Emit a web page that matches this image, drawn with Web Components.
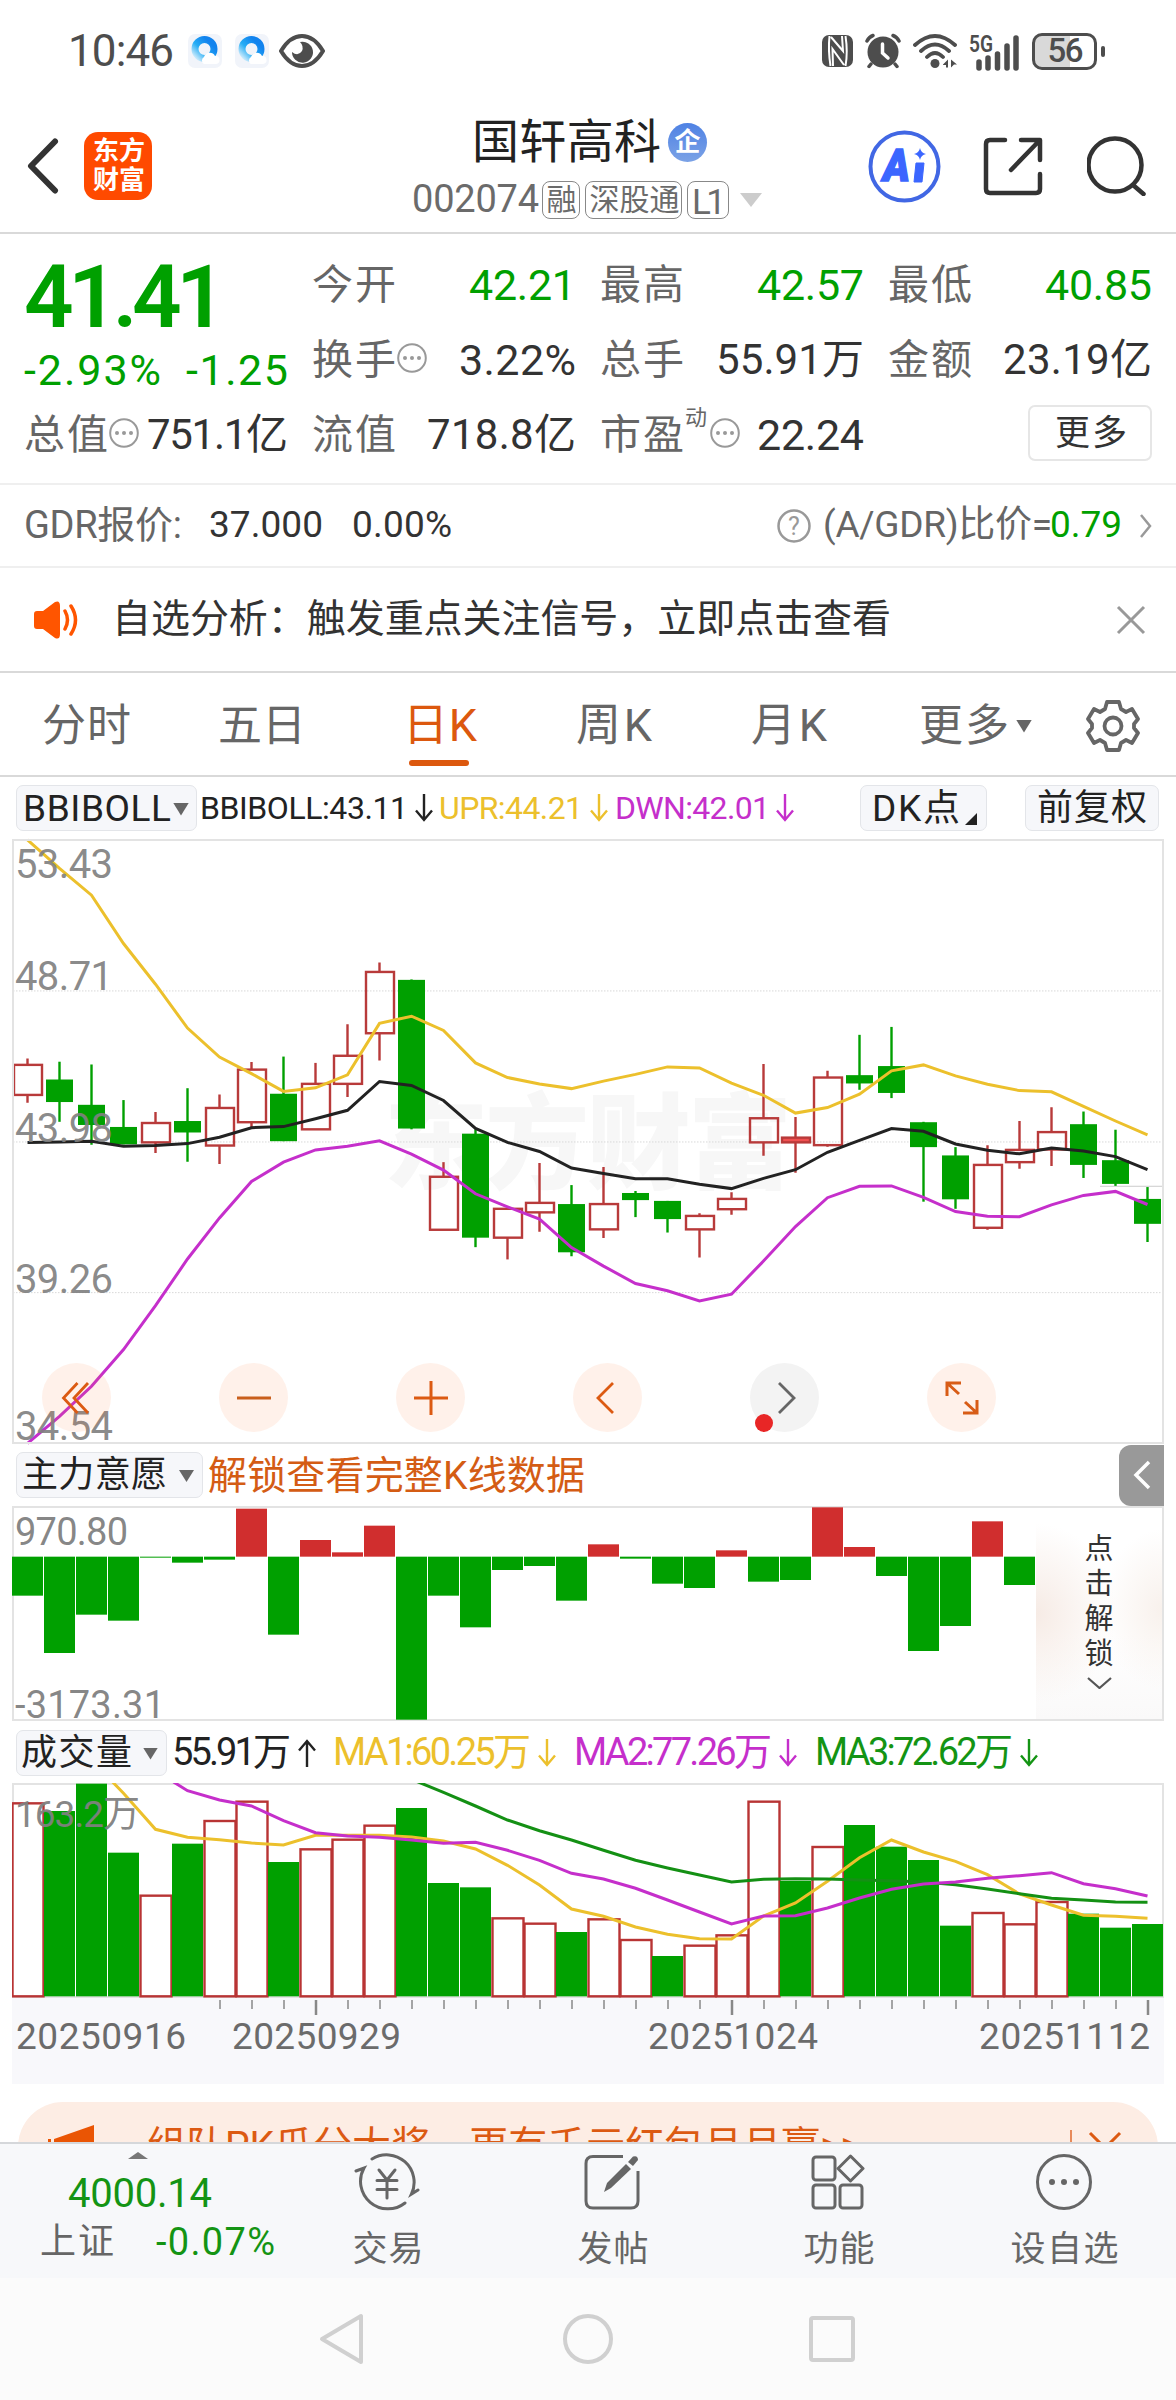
<!DOCTYPE html>
<html lang="zh-CN">
<head>
<meta charset="utf-8">
<title>国轩高科 002074</title>
<style>
    body {
        margin: 0;
        width: 1176px;
        height: 2400px;
        overflow: hidden;
        background: #fff;
        color: #333;
        font-family: Roboto, "Noto Sans CJK SC", sans-serif;
        display: flex;
        flex-direction: column;
    }
</style>
</head>
<body>
<status-bar></status-bar>
<stock-header></stock-header>
<quote-panel></quote-panel>
<gdr-row></gdr-row>
<notice-bar><fit-text w="777" s="39">自选分析：触发重点关注信号，立即点击查看</fit-text></notice-bar>
<period-tabs></period-tabs>
<indicator-row></indicator-row>
<candle-chart></candle-chart>
<flow-row></flow-row>
<flow-chart></flow-chart>
<volume-row></volume-row>
<volume-chart></volume-chart>
<date-axis></date-axis>
<promo-strip><fit-text w="712" s="39">组队PK瓜分大奖，更有千元红包月月赢&gt;&gt;</fit-text></promo-strip>
<bottom-nav></bottom-nav>
<system-nav></system-nav>

<script>
const GREEN = '#00a000';
const RED = '#b83a3a';
const GOLD = '#ecc02c';
const PURPLE = '#c52fcb';

function define(name, html) {
    customElements.define(name, class extends HTMLElement {
        constructor() {
            super();
            this.attachShadow({mode: 'open'}).innerHTML = html;
        }
    });
}

// one line of text, tracked so that it fills the width in "w"
class FitText extends HTMLElement {
    constructor() {
        super();
        this._root = this.attachShadow({mode: 'open'});
        this._root.innerHTML = `<style>
                                    :host {display: block; flex: none; white-space: nowrap; line-height: 1.2;}
                                    span {display: inline-block;}
                                </style><span><slot></slot></span>`;
    }

    connectedCallback() {
        const span = this._root.querySelector('span');
        this.style.fontSize = this.getAttribute('s') + 'px';
        if (this.hasAttribute('b')) this.style.fontWeight = this.getAttribute('b');
        if (this.hasAttribute('c')) this.style.color = this.getAttribute('c');
        const w = Number(this.getAttribute('w'));
        if (!w) return;
        const n = [...this.textContent].length;
        span.style.letterSpacing = '0px';
        // leave room for the side bearing of the last glyph
        span.style.letterSpacing = ((w + 2 - span.getBoundingClientRect().width) / Math.max(n - 1, 1)) + 'px';
        this.style.width = w + 'px';
    }
}
customElements.define('fit-text', FitText);

define('dots-icon', `<style>:host {display: block; flex: none; width: 30px; height: 30px;} svg {display: block;}</style>
    <svg width="30" height="30" fill="none" stroke="#999" stroke-width="2"><circle cx="15" cy="15" r="13.8"/>
    <g fill="#999" stroke="none"><circle cx="8" cy="15" r="2"/><circle cx="15" cy="15" r="2"/><circle cx="22" cy="15" r="2"/></g></svg>`);

define('down-caret', `<style>:host {display: block; flex: none; width: 16px; height: 13px;
        background: var(--caret, #666); clip-path: polygon(0 0, 100% 0, 50% 100%);}</style>`);

// thin arrow behind an indicator value
class TrendArrow extends HTMLElement {
    constructor() {
        super();
        const up = this.hasAttribute('up');
        this.attachShadow({mode: 'open'}).innerHTML = `
            <style>:host {display: block; flex: none; width: 18px; height: 30px;} svg {display: block; ${up ? 'transform: rotate(180deg);' : ''}}</style>
            <svg width="18" height="30" fill="none" stroke="currentColor" stroke-width="2.4"><path d="M9 1V27M1 17.500L9 27L17 17.500"/></svg>`;
    }
}
customElements.define('trend-arrow', TrendArrow);

define('chart-chip', `<style>
        :host {display: flex; flex: none; box-sizing: border-box; height: 46px; align-items: center; background: #f6f7fa;
            border: 1.5px solid #e3e5e9; border-radius: 7px; color: #222; padding-top: 2px;}
    </style><slot></slot>`);

define('status-bar', `<style>
        :host {display: flex; height: 100px; box-sizing: border-box; padding: 2px 71px 0 68px; align-items: center; color: #4d4d4d; flex: none;}
        svg {display: block; flex: none;}
        .battery {box-sizing: border-box; width: 65px; height: 37px; border: 3px solid #4d4d4d; border-radius: 10px; margin-left: 12px;
            background: linear-gradient(90deg, #d9d9d9 60%, #fff 60%); display: flex; align-items: center; justify-content: center;}
        .nub {width: 4px; height: 11px; border-radius: 2px; background: #4d4d4d; margin-left: 4px;}
    </style>
    <fit-text w="104" s="44">10:46</fit-text>
    <svg style="margin-left:16px" width="34" height="34" viewBox="0 0 34 34"><defs><linearGradient id="q" x1="1" y1="0" x2="0" y2="1"><stop offset=".2" stop-color="#1283ee"/><stop offset=".6" stop-color="#25adf5"/><stop offset="1" stop-color="#d8effc"/></linearGradient></defs><rect width="34" height="34" rx="7" fill="#f1f4fa"/><circle cx="16.500" cy="15" r="9.500" fill="none" stroke="url(#q)" stroke-width="7"/><path d="M16 30a4 4 0 0 1 0-7a6 6 0 0 1 11-1a4 4 0 0 1 1 8z" fill="#fff"/></svg>
    <svg style="margin-left:13px" width="34" height="34" viewBox="0 0 34 34"><rect width="34" height="34" rx="7" fill="#f1f4fa"/><circle cx="16.500" cy="15" r="9.500" fill="none" stroke="url(#q)" stroke-width="7"/><path d="M16 30a4 4 0 0 1 0-7a6 6 0 0 1 11-1a4 4 0 0 1 1 8z" fill="#fff"/></svg>
    <svg style="margin-left:10px" width="46" height="34" viewBox="0 0 46 34"><path d="M2 17Q11 2 23 2T44 17Q35 32 23 32T2 17Z" fill="none" stroke="#4d4d4d" stroke-width="4"/><path d="M21 8a10.500 10.500 0 1 1-8 10q6 5 10-1q2-5-2-9z" fill="#4d4d4d"/></svg>
    <svg style="margin-left:auto" width="32" height="34" viewBox="0 0 32 34"><rect y="1" width="31" height="32" rx="7" fill="#4d4d4d"/><path d="M7.500 2Q6 16 8.500 32M23.500 2Q26 18 23.500 32M9 3L21 17L20 2M11 32L10.500 15L22 31" fill="none" stroke="#fff" stroke-width="2"/></svg>
    <svg style="margin-left:11px" width="36" height="36" viewBox="0 0 36 36"><circle cx="18" cy="19" r="15.500" fill="#4d4d4d"/><path d="M2 8Q4 4 8 2.500M34 8Q32 4 28 2.500M6 31L4 33.500M30 31L32 33.500" stroke="#4d4d4d" stroke-width="3.500" stroke-linecap="round" fill="none"/><path d="M17.500 11V20L23 25" stroke="#fff" stroke-width="3.500" fill="none" stroke-linecap="round"/></svg>
    <svg style="margin-left:12px" width="44" height="36" viewBox="0 0 44 36"><g fill="none" stroke="#4d4d4d" stroke-width="3.800" stroke-linecap="round"><path d="M2 12Q22-6 42 12M8 18Q22 5 36 18M14 24Q22 16 30 24"/></g><circle cx="22" cy="30.500" r="4.500" fill="#4d4d4d"/><path d="M30 31.500L35 26.500V34.500H33V32H30zM38 26.500L44 31.500H41L38 34.500z" fill="#4d4d4d"/></svg>
    <svg style="margin-left:12px" width="51" height="40" viewBox="0 -4 51 40"><text x="0" y="17" font-size="23" font-weight="600" textLength="24" lengthAdjust="spacingAndGlyphs" fill="#4d4d4d">5G</text><path d="M10 27V33M19 23V33M28.500 19V33M38 11V33M47 3V33" stroke="#4d4d4d" stroke-width="5.500" stroke-linecap="round"/></svg>
    <div class="battery"><fit-text w="34" s="33" b="500">56</fit-text></div><div class="nub"></div>`);

define('stock-header', `<style>
        :host {display: grid; grid-template-columns: 412px 1fr 308px; flex: none; height: 134px; box-sizing: border-box; border-bottom: 2px solid #d9d9d9;}
        .left {display: flex; align-items: center; padding-left: 27px;}
        .logo {width: 68px; height: 68px; border-radius: 14px; background: #ff4a00; margin-left: 24px; display: grid; align-content: center; justify-content: center;}
        .mid {padding-top: 13px;}
        .title {display: flex; align-items: center; padding-left: 60px; height: 58px;}
        .badge {width: 39px; height: 39px; border-radius: 50%; background: linear-gradient(#4f82e4, #7ba2e6); display: grid; place-items: center; margin-left: 9px;
            color: #fff; font-size: 26px; line-height: 39px; font-weight: 700; margin-top: 1px;}
        .sub {display: flex; align-items: center; height: 58px; color: #6b6b6b;}
        .tag {box-sizing: border-box; height: 38px; border: 1.5px solid #888; border-radius: 8px; margin-left: 5px; display: grid; place-items: center;}
        down-caret {--caret: #ccc; width: 22px; height: 14px; margin-left: 11px;}
        .right {display: flex; align-items: center;}
        svg {display: block; flex: none;}
    </style>
    <div class="left">
        <svg width="33" height="58" fill="none" stroke="#333" stroke-width="6" stroke-linecap="round" stroke-linejoin="round"><path d="M28 4.500L4 29L28 53.500"/></svg>
        <div class="logo"><fit-text w="50" s="26" b="700" c="#fff" style="line-height:29px">东方</fit-text><fit-text w="50" s="26" b="700" c="#fff" style="line-height:29px">财富</fit-text></div>
    </div>
    <div class="mid">
        <div class="title"><fit-text w="187" s="47" c="#222">国轩高科</fit-text><div class="badge">企</div></div>
        <div class="sub"><fit-text w="125" s="38">002074</fit-text>
            <div class="tag" style="width:38px"><fit-text w="29" s="30">融</fit-text></div>
            <div class="tag" style="width:97px"><fit-text w="88" s="30">深股通</fit-text></div>
            <div class="tag" style="width:42px"><fit-text w="32" s="35">L1</fit-text></div>
            <down-caret></down-caret></div>
    </div>
    <div class="right">
        <svg width="73" height="73" viewBox="0 0 73 73"><circle cx="36.500" cy="36.500" r="34" fill="none" stroke="#4167e4" stroke-width="4"/><text x="15" y="51" font-size="44" font-weight="900" font-style="italic" fill="#3b66ff" stroke="#3b66ff" stroke-width="1.500" textLength="27" lengthAdjust="spacingAndGlyphs">A</text><path d="M48 33h8l-2 19h-8z" fill="#3b66ff" stroke="#3b66ff" stroke-linejoin="round"/><path d="M52 18q1 5 6 6q-5 1-6 6q-1-5-6-6q5-1 6-6z" fill="#3b66ff"/></svg>
        <svg style="margin-left:42px" width="60" height="60" fill="none" stroke="#333" stroke-width="4.500" stroke-linecap="round" stroke-linejoin="round"><path d="M22 4H7Q3 4 3 8V53Q3 57 7 57H53Q57 57 57 53V38M38 4H57V24M56 5L28 34"/></svg>
        <svg style="margin-left:44px" width="60" height="60" fill="none" stroke="#333" stroke-width="4.500" stroke-linecap="round"><circle cx="28" cy="29" r="26.500"/><path d="M46 49L56.500 58"/></svg>
    </div>`);

define('quote-cell', `<style>
        :host {display: flex; align-items: center; height: 75px; width: 262px; color: #333;}
        .label {display: flex; align-items: center; color: #666; gap: 3px;}
        ::slotted([slot=value]) {margin-left: auto;}
    </style><div class="label"><slot></slot></div><slot name="value"></slot>`);

define('quote-panel', `<style>
        :host {display: grid; grid-template-columns: repeat(4, 262px); column-gap: 26px; grid-auto-rows: 75px; flex: none; height: 251px;
            box-sizing: border-box; padding: 14px 25px 0 24px; border-bottom: 2px solid #efefef; color: #333;}
        .price {grid-row: span 2; display: flex; flex-direction: column; color: ${GREEN};}
        .change {display: flex; justify-content: space-between; margin-top: -1px;}
        .more {justify-self: end; align-self: center; box-sizing: border-box; width: 124px; height: 56px; border: 2px solid #e6e6e6; border-radius: 7px; display: grid; place-items: center; margin-right: -2px; margin-top: -5px; padding-top: 2px;}
        quote-cell dots-icon {margin-top: -5px;}
    </style>
    <div class="price"><fit-text w="200" s="87" b="600" style="line-height:98px">41.41</fit-text>
        <div class="change"><fit-text w="135" s="43">-2.93%</fit-text><fit-text w="100" s="43">-1.25</fit-text></div></div>
    <quote-cell><fit-text w="82" s="41">今开</fit-text><fit-text slot="value" w="105" s="43" c="${GREEN}">42.21</fit-text></quote-cell>
    <quote-cell><fit-text w="82" s="41">最高</fit-text><fit-text slot="value" w="105" s="43" c="${GREEN}">42.57</fit-text></quote-cell>
    <quote-cell><fit-text w="82" s="41">最低</fit-text><fit-text slot="value" w="105" s="43" c="${GREEN}">40.85</fit-text></quote-cell>
    <quote-cell><fit-text w="82" s="41">换手</fit-text><dots-icon></dots-icon><fit-text slot="value" w="115" s="43">3.22%</fit-text></quote-cell>
    <quote-cell><fit-text w="82" s="41">总手</fit-text><fit-text slot="value" w="146" s="42">55.91万</fit-text></quote-cell>
    <quote-cell><fit-text w="82" s="41">金额</fit-text><fit-text slot="value" w="147" s="42">23.19亿</fit-text></quote-cell>
    <quote-cell><fit-text w="82" s="41">总值</fit-text><dots-icon></dots-icon><fit-text slot="value" w="139" s="42">751.1亿</fit-text></quote-cell>
    <quote-cell><fit-text w="82" s="41">流值</fit-text><fit-text slot="value" w="147" s="42">718.8亿</fit-text></quote-cell>
    <quote-cell><fit-text w="82" s="41">市盈</fit-text><fit-text w="22" s="22" style="align-self:flex-start;margin-top:-6px">动</fit-text><dots-icon></dots-icon><fit-text slot="value" w="105" s="43">22.24</fit-text></quote-cell>
    <div class="more"><fit-text w="70" s="35">更多</fit-text></div>`);

define('gdr-row', `<style>
        :host {display: flex; align-items: center; flex: none; height: 83px; box-sizing: border-box; padding: 0 24px 0 24px; border-bottom: 2px solid #efefef; color: #666;}
        svg {display: block; flex: none;}
    </style>
    <fit-text w="156" s="38">GDR报价:</fit-text>
    <fit-text style="margin-left:29px" w="112" s="37" c="#333">37.000</fit-text>
    <fit-text style="margin-left:31px" w="98" s="37" c="#333">0.00%</fit-text>
    <svg style="margin-left:auto" width="34" height="34"><circle cx="17" cy="17" r="15.500" fill="none" stroke="#999" stroke-width="2.500"/><text x="17" y="25.500" text-anchor="middle" font-size="25" fill="#999">?</text></svg>
    <fit-text style="margin-left:12px" w="227" s="37">(A/GDR)比价=</fit-text>
    <fit-text style="margin-left:0" w="70" s="37" c="${GREEN}">0.79</fit-text>
    <svg style="margin-left:20px" width="12" height="24" fill="none" stroke="#999" stroke-width="2.500"><path d="M1 1L10 12L1 23"/></svg>`);

define('notice-bar', `<style>
        :host {display: flex; align-items: center; flex: none; height: 105px; box-sizing: border-box; padding: 0 30px 0 34px; border-bottom: 2px solid #d9d9d9; color: #333;}
        svg {display: block; flex: none;}
        ::slotted(fit-text) {margin-left: 34px;}
    </style>
    <svg width="44" height="38" viewBox="0 0 44 38"><path d="M3 10Q0 10 0 13V25Q0 28 3 28H9L21 37Q26 39 26 33V5Q26-1 21 1L9 10z" fill="#ff5500"/><path d="M31 10Q36 19 31 28M37 5Q46 19 37 33" fill="none" stroke="#ff5500" stroke-width="3.500" stroke-linecap="round"/></svg>
    <slot></slot>
    <svg style="margin-left:auto" width="30" height="30" stroke="#999" stroke-width="3"><path d="M2 2L28 28M28 2L2 28"/></svg>`);

define('period-tabs', `<style>
        :host {display: flex; align-items: center; flex: none; height: 104px; box-sizing: border-box; padding: 4px 0 0 42px; border-bottom: 2px solid #d9d9d9; color: #666;}
        .on {position: relative; color: #dc580e;}
        .on::after {content: ""; position: absolute; left: 50%; margin-left: -30px; bottom: -13px; width: 60px; height: 6px; border-radius: 3px; background: #dc580e;}
        svg {display: block; flex: none;}
    </style>
    <fit-text w="87" s="44">分时</fit-text>
    <fit-text style="margin-left:89px" w="86" s="44">五日</fit-text>
    <div class="on" style="margin-left:99px"><fit-text w="72" s="45">日K</fit-text></div>
    <fit-text style="margin-left:101px" w="74" s="45">周K</fit-text>
    <fit-text style="margin-left:101px" w="74" s="45">月K</fit-text>
    <fit-text style="margin-left:94px" w="88" s="44">更多</fit-text>
    <down-caret style="margin-left:9px"></down-caret>
    <svg style="margin-left:54px" width="54" height="54" viewBox="0 0 54 54" fill="none" stroke="#666" stroke-width="3.800" stroke-linejoin="round"><path d="M21 3H33L35 10L40 13L46 10L52 20L48 25V29L52 34L46 44L40 41L35 44L33 51H21L19 44L14 41L8 44L2 34L6 29V25L2 20L8 10L14 13L19 10Z"/><circle cx="27" cy="27" r="8.500"/></svg>`);

define('indicator-row', `<style>
        :host {display: flex; align-items: center; flex: none; height: 62px; padding-left: 16px;}
        .corner {width: 12px; height: 12px; background: #222; clip-path: polygon(100% 0, 100% 100%, 0 100%); margin: 20px 0 0 7px;}
        trend-arrow {margin-left: 9px;}
    </style>
    <chart-chip style="width:181px;padding-left:6px"><fit-text w="146" s="37">BBIBOLL</fit-text><down-caret style="margin-left:4px"></down-caret></chart-chip>
    <fit-text style="margin-left:3px" w="206" s="32" c="#222">BBIBOLL:43.11</fit-text><trend-arrow style="color:#222"></trend-arrow>
    <fit-text style="margin-left:6px" w="142" s="32" c="${GOLD}">UPR:44.21</fit-text><trend-arrow style="color:${GOLD}"></trend-arrow>
    <fit-text style="margin-left:7px" w="153" s="32" c="${PURPLE}">DWN:42.01</fit-text><trend-arrow style="color:${PURPLE};margin-left:8px"></trend-arrow>
    <chart-chip style="margin-left:66px;width:127px;padding-left:11px"><fit-text w="86" s="37">DK点</fit-text><div class="corner"></div></chart-chip>
    <chart-chip style="margin-left:38px;width:134px;padding-left:11px"><fit-text w="108" s="36">前复权</fit-text></chart-chip>`);

// columns are 32px apart, the first one is centred on 15.5
const X = i => 15.5 + 32 * i;
const line = (points, color, y, first = 0) =>
    `<polyline fill="none" stroke="${color}" stroke-width="3" points="${points.map((p, i) => X(i + first) + ',' + y(p).toFixed(1)).join(' ')}"/>`;

// kind, high, body top, body bottom, low
const CANDLES = [
    ['r', 578, 594, 670, 690], ['g', 586, 631, 688, 738], ['g', 593, 695, 746, 796], ['g', 683, 751, 795, 795],
    ['r', 713, 741, 790, 817], ['g', 653, 736, 765, 839], ['r', 669, 703, 798, 845], ['r', 587, 606, 739, 752],
    ['g', 573, 667, 787, 787], ['r', 589, 642, 757, 757], ['r', 491, 571, 642, 675], ['r', 335, 359, 514, 583],
    ['g', 378, 379, 755, 757], ['r', 840, 877, 1011, 1011], ['g', 757, 768, 1031, 1055], ['r', 958, 958, 1031, 1086],
    ['r', 842, 943, 967, 1016], ['g', 898, 946, 1068, 1078], ['r', 852, 946, 1010, 1032], ['g', 913, 918, 936, 979],
    ['g', 938, 938, 984, 1018], ['r', 969, 976, 1010, 1081], ['r', 916, 933, 959, 973], ['r', 592, 729, 790, 824],
    ['r', 726, 778, 790, 867], ['r', 609, 626, 797, 801], ['g', 518, 620, 641, 657], ['g', 498, 597, 665, 678],
    ['g', 738, 739, 802, 940], ['g', 802, 823, 934, 958], ['r', 797, 847, 1006, 1011], ['r', 736, 809, 840, 857],
    ['r', 701, 764, 808, 850], ['g', 712, 744, 847, 880], ['g', 758, 835, 895, 900], ['g', 903, 933, 996, 1042]
];
const UPR = [25, 97, 165, 287, 390, 501, 574, 616, 661, 652, 619, 489, 471, 507, 589, 626, 642, 654, 635, 618, 599, 602, 640, 671, 716, 702, 668, 609, 594, 622, 643, 659, 662, 699, 736, 771];
const BBI = [790, 789, 787, 800, 798, 793, 777, 753, 750, 730, 709, 636, 646, 684, 755, 790, 813, 855, 869, 882, 882, 896, 907, 881, 859, 815, 785, 755, 762, 794, 810, 819, 804, 812, 826, 859];
const DWN = [1551, 1483, 1407, 1314, 1203, 1085, 981, 889, 840, 809, 800, 786, 820, 860, 920, 953, 984, 1056, 1103, 1147, 1165, 1191, 1174, 1090, 1003, 930, 901, 900, 929, 965, 977, 978, 948, 924, 914, 947];

class CandleChart extends HTMLElement {
    constructor() {
        super();
        const y = v => v / 2.529 - 9;
        const candles = CANDLES.map(([k, hi, top, bottom, lo], i) => {
            const x = X(i);
            if (k === 'g')
                return `<path d="M${x} ${y(hi)}V${y(lo)}" stroke="${GREEN}" stroke-width="2.4"/>
                        <rect x="${x - 13.5}" y="${y(top)}" width="27" height="${y(bottom) - y(top)}" fill="${GREEN}"/>`;
            return `<path d="M${x} ${y(hi)}V${y(top)}M${x} ${y(bottom)}V${y(lo)}" stroke="${RED}" stroke-width="2.4"/>
                    <rect x="${x - 13.5}" y="${y(top)}" width="28" height="${y(bottom) - y(top)}" fill="${i === 24 ? '#f05050' : 'none'}" stroke="${RED}" stroke-width="2.4"/>`;
        }).join('');
        const grid = [407, 789, 1170].map(v => `<path d="M1 ${y(v)}H1151" stroke="#d8d8d8" stroke-dasharray="1.500 1.500"/>`).join('');
        const labels = [['53.43', 39], ['48.71', 151], ['43.98', 303], ['39.26', 454], ['34.54', 601]]
            .map(([t, at]) => `<text x="3" y="${at}" textLength="98">${t}</text>`).join('');
        this.attachShadow({mode: 'open'}).innerHTML = `<style>
                :host {display: block; flex: none; position: relative; height: 605px; margin: 0 12px;}
                svg {display: block; overflow: visible;}
                .tools {position: absolute; left: 30px; top: 524px; display: flex; gap: 108px;}
                .tools div {position: relative; width: 69px; height: 69px; border-radius: 50%; background: rgba(255, 120, 50, .1); display: grid; place-items: center;}
                .tools .off {background: #f3f3f3;}
                .off::after {content: ""; position: absolute; left: 5px; bottom: 0; width: 18px; height: 18px; border-radius: 50%; background: #e82626;}
            </style>
            <svg width="1152" height="605">
                <text x="372" y="342" font-size="104" font-weight="900" fill="#f7f7f7" textLength="408">东方财富</text>
                ${grid}
                <path d="M1088 ${y(901)}H1151" stroke="#ccc"/>
                ${candles}
                ${line(UPR, GOLD, y)}${line(BBI, '#222', y)}${line(DWN, PURPLE, y)}
                <g font-size="40" fill="#808080" fill-opacity=".92">${labels}</g>
                <rect x="1" y="1" width="1150" height="603" fill="none" stroke="#e3e3e3" stroke-width="2"/>
            </svg>
            <div class="tools">
                <div><svg width="34" height="34" fill="none" stroke="#dc5a12" stroke-width="2.800"><path d="M17.500 2L3.500 17L17.500 32M28 2L14 17L28 32"/></svg></div>
                <div><svg width="34" height="34" stroke="#c95f1c" stroke-width="3"><path d="M0 17H34"/></svg></div>
                <div><svg width="34" height="34" stroke="#dc5a12" stroke-width="3"><path d="M0 17H34M17 0V34"/></svg></div>
                <div><svg width="34" height="34" fill="none" stroke="#dc5a12" stroke-width="2.800"><path d="M22 2L7 17L22 32"/></svg></div>
                <div class="off"><svg width="34" height="34" fill="none" stroke="#666" stroke-width="2.800"><path d="M11 2L26 17L11 32"/></svg></div>
                <div><svg width="34" height="34" fill="none" stroke="#d85c16" stroke-width="3"><path d="M2 15V2H16M2 2L14 13M32 19V32H18M32 32L20 21"/></svg></div>
            </div>`;
    }
}
customElements.define('candle-chart', CandleChart);

define('flow-row', `<style>
        :host {display: flex; align-items: center; flex: none; height: 62px; padding: 0 12px 0 16px;}
        .fold {margin-left: auto; width: 45px; height: 61px; border-radius: 12px 0 0 12px; background: #999; display: grid; place-items: center;}
        svg {display: block;}
    </style>
    <chart-chip style="width:187px;padding-left:5px"><fit-text w="143" s="36">主力意愿</fit-text><down-caret style="margin-left:14px;width:15px;height:12px"></down-caret></chart-chip>
    <fit-text style="margin-left:5px;padding-top:2px" w="375" s="39" c="#d45c14">解锁查看完整K线数据</fit-text>
    <div class="fold"><svg width="18" height="30" fill="none" stroke="#fff" stroke-width="3.500"><path d="M16 2L3 15L16 28"/></svg></div>`);

const FLOW = [497, 669, 554, 572, 383, 398, 389, 236, 614, 330, 367, 287, 869, 497, 592, 420, 408, 512, 343, 386, 461, 474, 361, 455, 450, 232, 351, 438, 663, 588, 274, 465];

class FlowChart extends HTMLElement {
    constructor() {
        super();
        const y = v => v / 3 - 76;
        const zero = y(380);
        const bars = FLOW.map((v, i) => {
            const end = y(v);
            return `<rect x="${32 * i}" y="${Math.min(zero, end)}" width="31" height="${Math.abs(end - zero)}" fill="${end < zero ? '#d02e2e' : GREEN}"/>`;
        }).join('');
        this.attachShadow({mode: 'open'}).innerHTML = `<style>
                :host {display: grid; grid-template-columns: 1024px 1fr; flex: none; height: 215px; margin: 0 12px 1px; box-sizing: border-box;
                    box-shadow: inset 0 0 0 2px #e3e3e3;}
                svg {display: block;}
                .lock {display: flex; flex-direction: column; align-items: center; padding-top: 24px; margin: 2px 2px 2px 0; color: #333; font-size: 29px; line-height: 35px;
                    background: radial-gradient(ellipse 80px 90px at 0 50%, #f6ebe5, rgba(246, 235, 229, 0)), radial-gradient(ellipse 60px 80px at 100% 48%, #f8f1ec, rgba(248, 241, 236, 0)), linear-gradient(#fff, #fff 60%, #faf9f9);}
            </style>
            <svg width="1024" height="215">${bars}
                <g font-size="38" fill="#808080" fill-opacity=".95"><text x="3" y="39" textLength="113">970.80</text><text x="3" y="212" textLength="150">-3173.31</text></g></svg>
            <div class="lock"><span>点</span><span>击</span><span>解</span><span>锁</span>
                <svg style="margin-top:5px" width="25" height="12" fill="none" stroke="#555" stroke-width="2.200"><path d="M1 1L12.500 11L24 1"/></svg></div>`;
    }
}
customElements.define('flow-chart', FlowChart);

define('volume-row', `<style>
        :host {display: flex; align-items: center; flex: none; height: 61px; padding-left: 16px;}
        trend-arrow {margin-left: 9px;}
        fit-text {padding-top: 1px;}
    </style>
    <chart-chip style="width:151px;padding-left:4px"><fit-text w="109" s="36">成交量</fit-text><down-caret style="margin-left:13px;width:15px;height:12px"></down-caret></chart-chip>
    <fit-text style="margin-left:5px" w="117" s="38" c="#222">55.91万</fit-text><trend-arrow up style="color:#222"></trend-arrow>
    <fit-text style="margin-left:17px" w="196" s="38" c="${GOLD}">MA1:60.25万</fit-text><trend-arrow style="color:${GOLD}"></trend-arrow>
    <fit-text style="margin-left:18px" w="196" s="38" c="${PURPLE}">MA2:77.26万</fit-text><trend-arrow style="color:${PURPLE}"></trend-arrow>
    <fit-text style="margin-left:18px" w="196" s="38" c="#149414">MA3:72.62万</fit-text><trend-arrow style="color:#149414"></trend-arrow>`);

const VOLUME = 'r250 g273 g191 g398 r527 g371 r303 r245 g426 r388 r359 r317 g264 g489 g502 r595 r611 g636 r598 r660 g708 r677 r646 r245 g483 r381 g315 g380 g420 g617 r579 r613 r546 g581 g623 g612'.split(' ');
const MA1 = [120, 220, 328, 352, 359, 369, 375, 346, 346, 346, 351, 363, 387, 436, 495, 567, 589, 621, 643, 656, 657, 588, 549, 484, 413, 360, 396, 424, 464, 522, 555, 586, 589, 595];
const MA2 = [152, 212, 240, 258, 302, 338, 348, 352, 360, 370, 367, 391, 421, 460, 477, 505, 540, 576, 612, 588, 587, 564, 534, 508, 492, 486, 475, 467, 458, 491, 506, 528];
const MA3 = [178, 217, 258, 300, 332, 360, 391, 421, 444, 465, 486, 478, 476, 477, 480, 482, 486, 494, 507, 521, 535, 540, 546, 547];

class VolumeChart extends HTMLElement {
    constructor() {
        super();
        const y = v => v / 3 - 63;
        const base = y(829);
        const bars = VOLUME.map((item, i) => {
            const top = y(Number(item.slice(1)));
            return item[0] === 'g'
                ? `<rect x="${32 * i}" y="${top}" width="31" height="${base - top}" fill="${GREEN}"/>`
                : `<rect x="${32 * i + .5}" y="${top}" width="31" height="${base - top}" fill="#fff" stroke="#b83434" stroke-width="2.4"/>`;
        }).join('');
        this.attachShadow({mode: 'open'}).innerHTML = `<style>
                :host {display: block; flex: none; height: 215px; margin: 0 12px;}
                svg {display: block;}
            </style>
            <svg width="1152" height="215">
                <rect x="1" y="1" width="1150" height="213" fill="#fff" stroke="#e3e3e3" stroke-width="2"/>
                ${bars}
                ${line(MA1, GOLD, y, 2)}${line(MA3, '#149014', y, 12)}${line(MA2, PURPLE, y, 4)}
                <text x="3" y="44" font-size="37" fill="#808080" fill-opacity=".95" textLength="125">163.2万</text>
            </svg>`;
    }
}
customElements.define('volume-chart', VolumeChart);

class DateAxis extends HTMLElement {
    constructor() {
        super();
        let ticks = '';
        for (let i = 6; i < 36; i++) {
            const long = [9, 22, 35].includes(i);
            ticks += `<path d="M${X(i) + .5} 2V${long ? 17 : 11}" stroke="#888" stroke-width="${long ? 2.5 : 1.5}"/>`;
        }
        this.attachShadow({mode: 'open'}).innerHTML = `<style>
                :host {display: block; flex: none; height: 86px; margin: 0 12px; background: #f8f8fb; color: #6b6b6b;}
                svg {display: block;}
                div {display: flex; padding-left: 4px;}
            </style>
            <svg width="1152" height="17">${ticks}</svg>
            <div><fit-text w="168" s="37">20250916</fit-text><fit-text style="margin-left:48px" w="167" s="37">20250929</fit-text>
                <fit-text style="margin-left:249px" w="168" s="37">20251024</fit-text><fit-text style="margin-left:163px" w="169" s="37">20251112</fit-text></div>`;
    }
}
customElements.define('date-axis', DateAxis);

define('promo-strip', `<style>
        :host {display: block; flex: none; height: 58px; overflow: hidden;}
        .card {display: flex; height: 90px; margin: 18px 18px 0; background: #fdede4; border-radius: 46px; align-items: center; color: #dc5a12;}
        ::slotted(fit-text) {margin-left: 53px; margin-top: -2px;}
        svg {display: block; flex: none;}
        .bar {width: 2px; height: 34px; background: #e88a5a; margin-left: 211px;}
    </style>
    <div class="card">
        <svg style="margin-left:30px" width="46" height="44" fill="#ea5504"><path d="M0 14H3V30H0zM6 14L46 0V42L6 30z"/></svg>
        <slot></slot><div class="bar"></div>
        <svg style="margin-left:16px" width="34" height="34" fill="none" stroke="#dc5a12" stroke-width="3"><path d="M2 3L32 33M32 3L2 33"/></svg>
    </div>`);

define('nav-item', `<style>
        :host {display: flex; flex-direction: column; align-items: center; padding-top: 8px; color: #666;}
        .icon {height: 60px; display: grid; place-items: center; margin-bottom: 17px;}
    </style><div class="icon"><slot name="icon"></slot></div><slot></slot>`);

define('bottom-nav', `<style>
        :host {display: grid; grid-template-columns: 275px 224px 226px 226px 225px; flex: none; height: 136px; box-sizing: border-box; border-top: 2px solid #d5d7da; background: #f7f8fa; color: #666;}
        .index {display: flex; flex-direction: column; padding-top: 8px;}
        .up {width: 20px; height: 7px; background: #777; clip-path: polygon(50% 0, 100% 100%, 0 100%); margin-left: 128px;}
        .row {display: flex; justify-content: space-between; align-items: center; margin: 2px 2px 0 40px;}
        svg {display: block;}
    </style>
    <div class="index"><div class="up"></div><fit-text style="margin:11px 0 0 68px" w="142" s="40" c="#149414">4000.14</fit-text>
        <div class="row"><fit-text w="72" s="36">上证</fit-text><fit-text w="117" s="38" c="#149414">-0.07%</fit-text></div></div>
    <nav-item><svg slot="icon" width="66" height="60" fill="none" stroke="#666" stroke-width="3" stroke-linecap="round"><path d="M18 7A27.500 27.500 0 0 1 57.500 42L64 38M51 51A27.500 27.500 0 0 1 10 16L2 19"/><path d="M25 18L33 28L41 18M23 28.500H43M23 37.500H43M33 28V46"/></svg><fit-text w="69" s="35">交易</fit-text></nav-item>
    <nav-item><svg slot="icon" width="56" height="58" fill="none" stroke="#666" stroke-width="3"><path d="M39 3.500H9Q2 3.500 2 10.500V48Q2 55 9 55H47Q54 55 54 48V18"/><path d="M20 39L23 30L42 11L47 16L27 35Z" fill="#666" stroke="none"/><path d="M44 9L49 3.500Q54 2 54 7L49 13Z" fill="#666" stroke="none"/></svg><fit-text w="69" s="35">发帖</fit-text></nav-item>
    <nav-item><svg slot="icon" width="54" height="56" fill="none" stroke="#666" stroke-width="3" stroke-linejoin="round"><rect x="2" y="3" width="22" height="23" rx="3"/><rect x="2" y="31" width="22" height="23" rx="3"/><rect x="29" y="31" width="22" height="23" rx="3"/><path d="M39.500 2L52 14.500L39.500 27L27 14.500Z"/></svg><fit-text w="69" s="35">功能</fit-text></nav-item>
    <nav-item><svg slot="icon" width="58" height="58" fill="none" stroke="#666" stroke-width="3"><circle cx="29" cy="29" r="26.500"/><g fill="#666" stroke="none"><circle cx="17" cy="29" r="3"/><circle cx="29" cy="29" r="3"/><circle cx="41" cy="29" r="3"/></g></svg><fit-text w="106" s="35">设自选</fit-text></nav-item>`);

define('system-nav', `<style>
        :host {display: flex; align-items: center; flex: none; height: 122px; background: #fbfbfb; padding-left: 319px;}
        svg {display: block;}
    </style>
    <svg width="46" height="52" fill="none" stroke="#d0d0d0" stroke-width="4" stroke-linejoin="round"><path d="M42 3V49L3 26Z"/></svg>
    <svg style="margin-left:197px" width="52" height="52" fill="none" stroke="#d0d0d0" stroke-width="4"><circle cx="26" cy="26" r="23"/></svg>
    <svg style="margin-left:194px" width="50" height="50" fill="none" stroke="#d0d0d0" stroke-width="4"><rect x="3" y="4" width="42" height="42" rx="2"/></svg>`);
</script>
</body>
</html>
